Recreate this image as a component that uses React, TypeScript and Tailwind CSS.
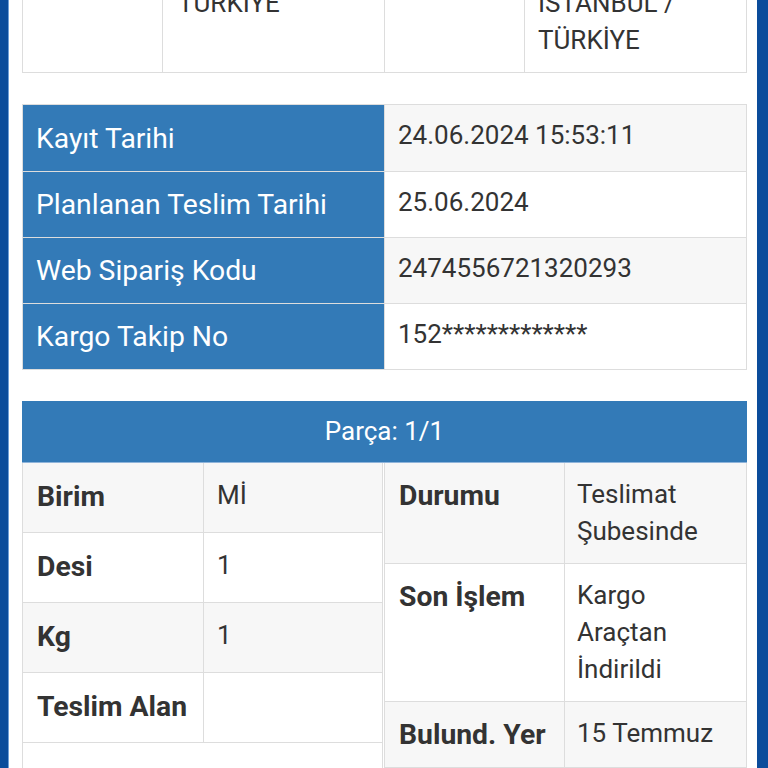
import React from "react";

const font = { fontFamily: "Roboto, 'Noto Sans', sans-serif" };

export default function App() {
  const infoRows = [
    { label: "Kayıt Tarihi", value: "24.06.2024 15:53:11", striped: true },
    { label: "Planlanan Teslim Tarihi", value: "25.06.2024", striped: false },
    { label: "Web Sipariş Kodu", value: "2474556721320293", striped: true },
    { label: "Kargo Takip No", value: "152*************", striped: false },
  ];
  const leftRows = [
    { label: "Birim", value: "Mİ", striped: true },
    { label: "Desi", value: "1", striped: false },
    { label: "Kg", value: "1", striped: true },
    { label: "Teslim Alan", value: "", striped: false },
  ];
  const rightRows = [
    { label: "Durumu", value: ["Teslimat", "Şubesinde"], striped: true },
    { label: "Son İşlem", value: ["Kargo", "Araçtan", "İndirildi"], striped: false },
    { label: "Bulund. Yer", value: ["15 Temmuz"], striped: true },
  ];

  return (
    <div
      className="w-[768px] h-[768px] overflow-hidden flex items-start bg-white text-[#333] text-[26px] leading-[37px]"
      style={font}
    >
      <div className="w-[8px] h-[768px] shrink-0 bg-[#0b4c9b]" />
      <div className="w-[1px] h-[768px] shrink-0 bg-[#6f9fd8]" />
      <div className="flex-1 pl-[13px] pr-[10px]">
        {/* Top address table (cut off) */}
        <div className="h-[73px] overflow-hidden relative">
          <div className="flex border-x border-b border-[#ddd] h-[103px] mt-[-30px]">
            <div className="w-[140px] border-r border-[#ddd]" />
            <div className="w-[222px] border-r border-[#ddd] px-[15px] pt-[15px]">TÜRKİYE</div>
            <div className="w-[140px] border-r border-[#ddd]" />
            <div className="flex-1 px-[13px] pt-[15px]">
              <div>İSTANBUL /</div>
              <div>TÜRKİYE</div>
            </div>
          </div>
        </div>

        {/* Info table */}
        <div className="mt-[31px] border border-[#ddd]">
          {infoRows.map((r, i) => (
            <div key={i} className={`flex h-[66px] ${i > 0 ? "border-t border-[#ddd]" : ""}`}>
              <div className="w-[361px] shrink-0 bg-[#337ab7] text-white text-[28.3px] px-[13px] flex items-center">
                {r.label}
              </div>
              <div
                className={`flex-1 border-l border-[#ddd] px-[13px] pt-[12px] ${
                  r.striped ? "bg-[#f7f7f7]" : "bg-white"
                }`}
              >
                {r.value}
              </div>
            </div>
          ))}
        </div>

        {/* Parça section */}
        <div className="mt-[31px] h-[62px] bg-[#337ab7] text-white flex items-center justify-center border-b border-[#8fb4da]">
          Parça: 1/1
        </div>
        <div className="flex items-start gap-[1px]">
          <div className="w-[361px] shrink-0 border-x border-[#ddd]">
            {leftRows.map((r, i) => (
              <div
                key={i}
                className={`flex h-[70px] border-b border-[#ddd] ${
                  r.striped ? "bg-[#f7f7f7]" : "bg-white"
                }`}
              >
                <div className="w-[181px] shrink-0 border-r border-[#ddd] px-[14px] pt-[15px] font-bold text-[28.3px]">
                  {r.label}
                </div>
                <div className="flex-1 px-[13px] pt-[14px]">{r.value}</div>
              </div>
            ))}
            <div className="h-[60px] bg-white" />
          </div>
          <div className="flex-1 border-x border-[#ddd]">
            {rightRows.map((r, i) => (
              <div
                key={i}
                className={`flex border-b border-[#ddd] ${r.striped ? "bg-[#f7f7f7]" : "bg-white"}`}
              >
                <div className="w-[180px] shrink-0 border-r border-[#ddd] px-[14px] py-[14px] font-bold text-[28.3px]">
                  {r.label}
                </div>
                <div className="flex-1 px-[12px] py-[13px]">
                  {r.value.map((v, j) => (
                    <div key={j}>{v}</div>
                  ))}
                </div>
              </div>
            ))}
            <div className="h-[60px] border-r border-[#ddd] w-[181px]" />
          </div>
        </div>
      </div>
      <div className="w-[11px] h-[768px] shrink-0 bg-[#0b4c9b]" />
    </div>
  );
}
